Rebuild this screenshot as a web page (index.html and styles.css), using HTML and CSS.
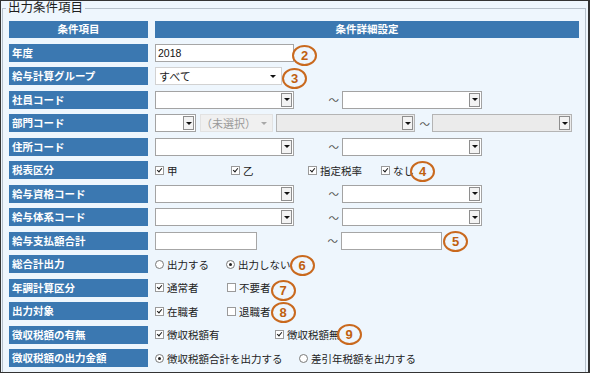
FILE: index.html
```
<!DOCTYPE html>
<html lang="ja">
<head>
<meta http-equiv="content-type" content="text/html; charset=utf-8"/>
<title>出力条件項目</title>
<link rel="stylesheet" href="styles.css">
</head>

<body>

<div class="frame">
<fieldset class="conditions">
<legend>出力条件項目</legend>

<div class="cond_grid">

	<div class="head">条件項目</div>
	<div class="head">条件詳細設定</div>

	<div class="label">年度</div>
	<div class="value">
		<input class="text w139" type="text" value="2018">
		<span class="mark mark_2">2</span>
	</div>

	<div class="label">給与計算グループ</div>
	<div class="value">
		<div class="combo plain w127"><span class="combo_text">すべて</span><span class="arrow"></span></div>
		<span class="mark mark_3">3</span>
	</div>

	<div class="label">社員コード</div>
	<div class="value">
		<div class="combo w139"><span class="drop"></span></div>
		<span class="tilde">～</span>
		<div class="combo w140"><span class="drop"></span></div>
	</div>

	<div class="label">部門コード</div>
	<div class="value">
		<div class="combo w41"><span class="drop"></span></div>
		<div class="combo plain disabled w73"><span class="combo_text">（未選択）</span><span class="arrow"></span></div>
		<div class="combo disabled w139 after_plain"><span class="drop"></span></div>
		<span class="tilde short">～</span>
		<div class="combo disabled w140"><span class="drop"></span></div>
	</div>

	<div class="label">住所コード</div>
	<div class="value">
		<div class="combo w139"><span class="drop"></span></div>
		<span class="tilde">～</span>
		<div class="combo w140"><span class="drop"></span></div>
	</div>

	<div class="label">税表区分</div>
	<div class="value">
		<span class="opt w72"><span class="cb on"></span>甲</span>
		<span class="opt w73"><span class="cb on"></span>乙</span>
		<span class="opt w73"><span class="cb on"></span>指定税率</span>
		<span class="opt"><span class="cb on"></span>なし</span>
		<span class="mark mark_4">4</span>
	</div>

	<div class="label">給与資格コード</div>
	<div class="value">
		<div class="combo w139"><span class="drop"></span></div>
		<span class="tilde">～</span>
		<div class="combo w140"><span class="drop"></span></div>
	</div>

	<div class="label">給与体系コード</div>
	<div class="value">
		<div class="combo w139"><span class="drop"></span></div>
		<span class="tilde">～</span>
		<div class="combo w140"><span class="drop"></span></div>
	</div>

	<div class="label">給与支払額合計</div>
	<div class="value">
		<input class="text w102" type="text">
		<span class="tilde wide">～</span>
		<input class="text w101" type="text">
		<span class="mark mark_5">5</span>
	</div>

	<div class="label">総合計出力</div>
	<div class="value">
		<span class="opt w71"><span class="rb"></span>出力する</span>
		<span class="opt"><span class="rb on"></span>出力しない</span>
		<span class="mark mark_6">6</span>
	</div>

	<div class="label">年調計算区分</div>
	<div class="value">
		<span class="opt w72"><span class="cb on"></span>通常者</span>
		<span class="opt"><span class="cb"></span>不要者</span>
		<span class="mark mark_7">7</span>
	</div>

	<div class="label">出力対象</div>
	<div class="value">
		<span class="opt w72"><span class="cb on"></span>在職者</span>
		<span class="opt"><span class="cb"></span>退職者</span>
		<span class="mark">8</span>
	</div>

	<div class="label">徴収税額の有無</div>
	<div class="value">
		<span class="opt w120"><span class="cb on"></span>徴収税額有</span>
		<span class="opt"><span class="cb on"></span>徴収税額無</span>
		<span class="mark mark_9">9</span>
	</div>

	<div class="label">徴収税額の出力金額</div>
	<div class="value">
		<span class="opt w144"><span class="rb on"></span>徴収税額合計を出力する</span>
		<span class="opt"><span class="rb"></span>差引年税額を出力する</span>
	</div>

</div>

</fieldset>
</div>

</body>
</html>
```

FILE: styles.css
```
body {
margin: 0;
font: 10.5px "Liberation Sans", "Noto Sans CJK JP", sans-serif;
color: #222222;
}

/* outer window frame */
.frame {
width: 590px;
height: 373px;
box-sizing: border-box;
border: 1px solid #333333;
border-right-width: 2px;
background-color: #eef6fd;
overflow: hidden;
}

.conditions {
margin: 0 2px 0 1px;
padding: 6px 6px 10px 6px;
border: 1px solid #b7c1cb;
min-width: 0;
}

.conditions > legend {
margin-left: -3px;
padding: 0 2px;
font-size: 12.5px;
line-height: 14px;
color: #1e1e1e;
}


/* condition table */


.cond_grid {
display: grid;
grid-template-columns: 139px 1fr;
grid-template-rows: 17px;
grid-auto-rows: 18px;
column-gap: 7px;
row-gap: 5.5px;
}

.head, .label {
background-color: #3b78b1;
color: #ffffff;
font-weight: bold;
}

.head {
text-align: center;
line-height: 17px;
}

.label {
padding-left: 3px;
line-height: 18px;
white-space: nowrap;
}

.value {
display: flex;
align-items: center;
padding-left: 2px;
margin-left: -2px;
}


/* inputs */


.text {
height: 18px;
box-sizing: border-box;
border: 1px solid #a6a6a6;
background-color: #ffffff;
padding: 0 2px;
font: inherit;
color: #111111;
outline: none;
margin: 0;
}

.combo {
height: 18px;
box-sizing: border-box;
display: flex;
align-items: center;
justify-content: flex-end;
border: 1px solid #a3a3a3;
background-color: #ffffff;
padding-right: 1px;
flex-shrink: 0;
}

.combo.disabled {
background-color: #ebebeb;
border-color: #b4b4b4;
}

.combo.plain {
justify-content: space-between;
border-color: #d2d2d2;
padding: 0 5px 0 3px;
}

.combo.plain.disabled {
background-color: #f0f0f0;
border-color: #e2e2e2;
color: #9a9a9a;
padding-left: 0;
}

.combo_text {
white-space: nowrap;
font-size: 11px;
}

/* the little button with the triangle at the end of a combo */
.drop {
width: 9px;
height: 12px;
border: 1px solid #8e8e8e;
background-color: #f3f3f3;
display: flex;
align-items: center;
justify-content: center;
}

.drop::after, .arrow::after {
content: "";
border-left: 3px solid transparent;
border-right: 3px solid transparent;
border-top: 3px solid #111111;
}

.arrow {
display: flex;
}

.disabled .arrow::after {
border-top-color: #a8a8a8;
}

.tilde {
width: 48px;
box-sizing: border-box;
text-align: right;
padding-right: 3px;
color: #555555;
flex-shrink: 0;
}

.tilde.short {
width: 17px;
padding-right: 2px;
}

.tilde.wide {
width: 84px;
}

.w41 { width: 41px; }
.w73 { width: 73px; margin-left: 4px; }
.w101 { width: 101px; }
.w102 { width: 102px; }
.w127 { width: 127px; }
.w139 { width: 139px; }
.w140 { width: 140px; }
.combo.after_plain { margin-left: 3px; }


/* checkboxes and radio buttons */


.opt {
display: flex;
align-items: center;
white-space: nowrap;
flex-shrink: 0;
}

.opt.w71 { width: 71px; }
.opt.w72 { width: 72px; }
.opt.w73 { width: 73px; }
.opt.w120 { width: 120px; }
.opt.w144 { width: 144px; }

.cb, .rb {
position: relative;
width: 9px;
height: 9px;
box-sizing: border-box;
background-color: #ffffff;
margin-right: 3px;
flex-shrink: 0;
}

.cb {
border: 1px solid #9a9a9a;
}

.cb.on::after {
content: "";
position: absolute;
left: 2px;
top: 0;
width: 2px;
height: 4px;
border: solid #1a1a1a;
border-width: 0 1.5px 1.5px 0;
transform: rotate(40deg);
}

.rb {
border: 1px solid #7a7a7a;
border-radius: 50%;
}

.rb.on::after {
content: "";
position: absolute;
left: 2px;
top: 2px;
width: 3px;
height: 3px;
border-radius: 50%;
background-color: #222222;
}


/* numbered callouts drawn over the form */


.mark {
width: 25px;
height: 21px;
box-sizing: border-box;
border: 2px solid #c9691e;
border-radius: 50%;
display: flex;
align-items: center;
justify-content: center;
color: #c0600f;
font: bold 13px "Liberation Sans", sans-serif;
flex-shrink: 0;
margin-top: 3px;
}

.mark_2 { margin-left: -2px; margin-top: 6px; }
.mark_3 { margin-top: 5px; }
.mark_4 { margin-left: -4px; }
.mark_5 { margin-left: 1px; margin-top: 1px; }
.mark_6 { margin-left: -1px; }
.mark_7 { margin-left: 0; margin-top: 5px; }
.mark_9 { margin-left: -3px; margin-top: 0; }
```
